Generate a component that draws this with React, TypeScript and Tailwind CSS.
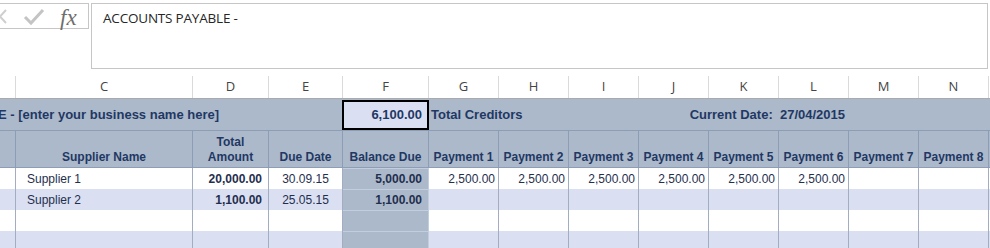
import React from 'react';

const widths = [
  'w-[16px]', 'w-[177px]', 'w-[76px]', 'w-[74px]', 'w-[86px]',
  'w-[70px]', 'w-[70px]', 'w-[70px]', 'w-[70px]', 'w-[70px]', 'w-[70px]', 'w-[70px]', 'w-[70px]',
];

const letters = ['', 'C', 'D', 'E', 'F', 'G', 'H', 'I', 'J', 'K', 'L', 'M', 'N'];

const heads = [
  '', 'Supplier Name', 'Total\nAmount', 'Due Date', 'Balance Due',
  'Payment 1', 'Payment 2', 'Payment 3', 'Payment 4', 'Payment 5', 'Payment 6', 'Payment 7', 'Payment 8',
];

const rows: string[][] = [
  ['', 'Supplier 1', '20,000.00', '30.09.15', '5,000.00', '2,500.00', '2,500.00', '2,500.00', '2,500.00', '2,500.00', '2,500.00', '', ''],
  ['', 'Supplier 2', '1,100.00', '25.05.15', '1,100.00', '', '', '', '', '', '', '', ''],
  ['', '', '', '', '', '', '', '', '', '', '', '', ''],
  ['', '', '', '', '', '', '', '', '', '', '', '', ''],
];

const arial = "font-['Liberation_Sans',Arial,sans-serif]";

export default function App() {
  return (
    <div className="w-[990px] h-[248px] overflow-hidden bg-white">
      {/* Formula bar */}
      <div className="flex pt-[3px] h-[76px]">
        <div className="relative w-[89px] h-[26px] border-y border-r border-[#c6c6c6] shrink-0">
          <svg className="absolute left-0 top-0" width="89" height="26" viewBox="0 0 89 26">
            <path d="M-6 6 L6 19 M6 6 L-6 19" stroke="#cfcfcf" strokeWidth="2" fill="none" />
            <path d="M25 13 L31 19 L43 6" stroke="#c4c4c4" strokeWidth="3" fill="none" />
          </svg>
          <span className="absolute left-[60px] top-[-3px] text-[23px] italic text-[#6e6e6e] font-['Liberation_Serif',serif]">
            fx
          </span>
        </div>
        <div className="ml-[2px] w-[897px] h-[66px] border border-[#c6c6c6] pl-[11px] pt-[4px] text-[13.5px] text-[#262626] font-['Open_Sans',sans-serif] tracking-[-0.2px]">
          ACCOUNTS PAYABLE -
        </div>
      </div>

      {/* Column letters */}
      <div className="flex h-[23px] border-b border-[#ababab] text-[13px] text-[#444] font-['Open_Sans',sans-serif]">
        {letters.map((l, i) => (
          <div key={i} className={`${widths[i]} shrink-0 border-r border-[#dadada] flex items-center justify-center`}>
            {l}
          </div>
        ))}
      </div>

      {/* Title band */}
      <div className={`flex h-[32px] bg-[#acb9ca] border-b border-[#8d9db6] text-[13px] font-bold text-[#1f3864] ${arial}`}>
        <div className="w-[342px] shrink-0 flex items-center overflow-hidden whitespace-nowrap">
          <span className="-ml-[2px]">E - [enter your business name here]</span>
        </div>
        <div className="w-[87px] h-[30px] mt-[1px] shrink-0 border-2 border-black bg-[#dae0f2] flex items-center justify-end pr-[5px]">
          6,100.00
        </div>
        <div className="w-[200px] shrink-0 flex items-center pl-[2px]">Total Creditors</div>
        <div className="w-[219px] shrink-0 flex items-center justify-end pr-[3px]">Current Date:&nbsp; 27/04/2015</div>
      </div>

      {/* Header row */}
      <div className={`flex h-[37px] bg-[#acb9ca] border-b border-[#8d9db6] text-[12px] font-bold text-[#1f3864] ${arial}`}>
        {heads.map((h, i) => (
          <div
            key={i}
            className={`${widths[i]} shrink-0 border-r border-[#8d9db6] flex items-end justify-center text-center whitespace-pre leading-[15px] pb-[2px]`}
          >
            {h}
          </div>
        ))}
      </div>

      {/* Data rows */}
      {rows.map((r, ri) => (
        <div
          key={ri}
          className={`flex h-[21px] text-[12px] text-[#1f2f4f] ${arial} ${ri % 2 === 0 ? 'bg-white' : 'bg-[#dadff1]'}`}
        >
          {r.map((v, ci) => {
            let cls = 'justify-end pr-[3px]';
            if (ci === 1) cls = 'justify-start pl-[11px]';
            if (ci === 2) cls = 'justify-end pr-[6px] font-bold';
            if (ci === 3) cls = 'justify-center';
            if (ci === 4) cls = 'justify-end pr-[6px] font-bold bg-[#acb9ca] border-t border-[#c3cde0]';
            return (
              <div key={ci} className={`${widths[ci]} shrink-0 border-r border-[#a3adc2] flex items-center whitespace-nowrap ${cls}`}>
                {v}
              </div>
            );
          })}
        </div>
      ))}
    </div>
  );
}
